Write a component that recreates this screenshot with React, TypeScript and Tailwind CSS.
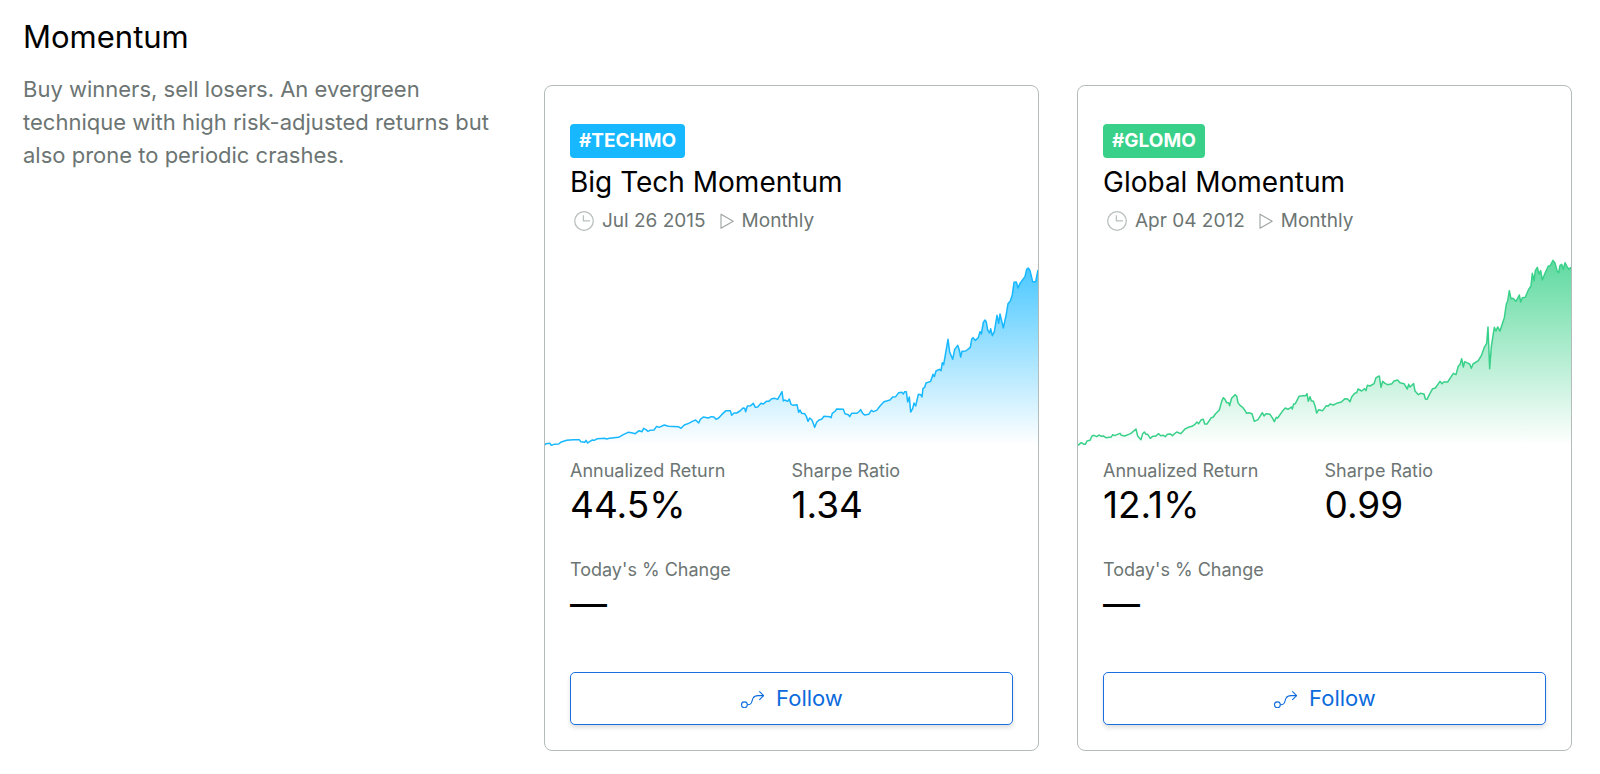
import * as React from 'react';
import clsx from 'clsx';

type Strategy = {
  tag: string;
  name: string;
  since: string;
  rebalance: string;
  annualReturn: string;
  sharpe: string;
  change: string;
  color: string;
  badge: string;
  points: string;
};

export default function App() {
  return (
    <main className="grid grid-cols-3 gap-x-[38px] pl-[11px] pr-7 pt-5 pb-6 bg-white font-['Inter',sans-serif] text-black">
      <header className="pl-3">
        <h1 className="text-[31px] leading-[34px]">Momentum</h1>
        <p className="mt-[19px] text-[22px] leading-[33px] text-[#6c7573]">
          Buy winners, sell losers. An evergreen technique with high risk-adjusted returns but also
          prone to periodic crashes.
        </p>
      </header>

      {strategies.map((strategy) => (
        <StrategyCard key={strategy.tag} {...strategy} />
      ))}
    </main>
  );
}

function StrategyCard(props: Strategy) {
  return (
    <article className="mt-[65px] overflow-hidden rounded-lg border border-[#b4bcba]">
      <div className="px-[25px] pt-[38px]">
        <span
          className={clsx(
            'inline-flex h-[34px] items-center rounded px-[9px] text-[19px] font-bold text-white',
            props.badge
          )}
        >
          {props.tag}
        </span>
        <h2 className="mt-1.5 text-[28px] leading-9">{props.name}</h2>
        <div className="mt-2 flex h-[26px] items-center text-[19px] text-[#6c7573]">
          <ClockIcon />
          <span className="ml-2">{props.since}</span>
          <PlayIcon />
          <span className="ml-2">{props.rebalance}</span>
        </div>
      </div>

      <Chart id={props.tag.slice(1)} color={props.color} points={props.points} />

      <div className="px-[25px] pt-2 pb-[25px]">
        <dl className="grid grid-cols-2 gap-y-[31px]">
          <Stat label="Annualized Return" value={props.annualReturn} />
          <Stat label="Sharpe Ratio" value={props.sharpe} />
          <Stat label="Today's % Change" value={props.change} />
        </dl>
        <button
          type="button"
          className="mt-[47px] flex h-[53px] w-full items-center justify-center gap-3 rounded-[5px] border border-[#1a6fe0] bg-white text-[22px] text-[#0b6bdc] shadow-[0_3px_4px_rgba(0,0,0,0.12)]"
        >
          <FollowIcon />
          Follow
        </button>
      </div>
    </article>
  );
}

function Stat({ label, value }: { label: string; value: string }) {
  return (
    <div>
      <dt className="text-[18px] leading-[26px] text-[#6c7573]">{label}</dt>
      <dd className="text-[37px] leading-[42px]">{value}</dd>
    </div>
  );
}

function Chart({ id, color, points }: { id: string; color: string; points: string }) {
  return (
    <svg
      className="mt-4 block h-[200px] w-full"
      viewBox="0 0 1479 600"
      preserveAspectRatio="none"
      aria-hidden="true"
    >
      <defs>
        <linearGradient id={id} gradientUnits="userSpaceOnUse" x1="0" y1="0" x2="0" y2="585">
          <stop offset="0" stopColor={color} stopOpacity="0.85" />
          <stop offset="1" stopColor={color} stopOpacity="0" />
        </linearGradient>
      </defs>
      <polygon points={`0,586 ${points} 1479,586`} fill={`url(#${id})`} />
      <polyline
        points={points}
        fill="none"
        stroke={color}
        strokeWidth="1.5"
        strokeLinejoin="round"
        vectorEffect="non-scaling-stroke"
      />
    </svg>
  );
}

function ClockIcon() {
  return (
    <svg className="ml-1 size-5" viewBox="0 0 20 20" fill="none" stroke="#b9bfbe" aria-hidden="true">
      <circle cx="10" cy="10" r="9.3" strokeWidth="1.3" />
      <path d="M9.4 4.2V9.8H16" strokeWidth="1.3" />
    </svg>
  );
}

function PlayIcon() {
  return (
    <svg className="ml-3.5 h-4 w-3.5" viewBox="0 0 14 16" fill="none" stroke="#9da3a2" aria-hidden="true">
      <path d="M1 1.2V15.2L13.2 8.2Z" strokeWidth="1.1" strokeLinejoin="round" />
    </svg>
  );
}

function FollowIcon() {
  return (
    <svg className="h-[18px] w-6" viewBox="0 0 24 18" fill="none" stroke="currentColor" aria-hidden="true">
      <circle cx="4.4" cy="14.8" r="2.9" strokeWidth="1.1" />
      <path d="M7.3 14.8C13 14.8 11.3 11 13 8.2C14.2 6.1 15.8 5.6 18 5.6H23.4" strokeWidth="1.1" />
      <path d="M19.3 1.3L23.6 5.6L19.3 9.9" strokeWidth="1.1" />
    </svg>
  );
}

const strategies: Strategy[] = [
  {
    tag: '#TECHMO',
    name: 'Big Tech Momentum',
    since: 'Jul 26 2015',
    rebalance: 'Monthly',
    annualReturn: '44.5%',
    sharpe: '1.34',
    change: '—',
    color: '#17b8ff',
    badge: 'bg-[#17b8ff]',
    points:
      '0,585 3,581 15,580 19,586 27,583 41,582 47,577 65,571 85,569 103,569 107,575 119,577 123,571 128,579 135,574 142,570 148,571 157,566 180,565 185,567 193,565 221,562 235,554 249,547 260,548 271,551 282,542 291,545 296,535 303,539 309,544 315,541 327,540 335,529 342,532 358,525 370,529 400,530 408,535 418,525 431,520 442,514 452,510 461,519 466,508 475,501 490,504 499,500 507,501 513,508 521,504 530,494 543,482 556,482 560,496 567,489 575,489 585,483 594,474 599,475 602,485 607,468 617,467 625,460 631,472 638,471 648,460 655,462 664,454 672,454 680,446 690,445 698,448 711,425 715,453 719,450 728,454 733,447 738,463 745,466 756,464 761,487 765,480 770,490 779,491 784,499 789,514 794,504 801,510 809,532 815,517 822,510 830,508 837,499 855,500 858,503 862,490 871,483 875,477 895,478 900,491 910,494 914,500 920,490 935,490 941,486 947,479 953,490 959,495 971,493 979,481 985,485 995,481 1005,468 1017,455 1035,450 1043,441 1052,440 1061,428 1070,427 1075,432 1079,425 1084,425 1088,456 1093,441 1097,486 1103,476 1107,459 1112,468 1120,433 1127,434 1131,441 1134,415 1139,412 1143,399 1157,394 1164,373 1168,380 1173,363 1183,358 1188,362 1192,338 1196,344 1209,268 1214,306 1223,328 1229,298 1238,286 1243,300 1247,321 1251,304 1262,303 1276,292 1280,268 1284,263 1291,271 1300,263 1305,245 1309,252 1315,217 1320,210 1324,216 1328,240 1334,249 1337,236 1342,257 1348,245 1356,196 1361,220 1365,192 1375,234 1384,192 1389,161 1396,153 1402,134 1407,97 1414,96 1419,114 1425,100 1440,80 1445,58 1450,54 1455,62 1463,95 1472,95 1479,60',
  },
  {
    tag: '#GLOMO',
    name: 'Global Momentum',
    since: 'Apr 04 2012',
    rebalance: 'Monthly',
    annualReturn: '12.1%',
    sharpe: '0.99',
    change: '—',
    color: '#39d189',
    badge: 'bg-[#39d189]',
    points:
      '0,586 10,578 18,583 22,583 27,573 36,571 42,558 48,556 56,560 64,555 70,559 76,558 84,563 100,561 104,554 110,557 126,550 130,556 140,558 158,551 174,537 179,558 189,569 194,551 199,546 204,553 209,553 217,565 224,559 232,559 242,551 248,557 256,556 262,560 268,553 278,552 283,557 296,546 308,551 321,537 331,532 342,529 351,523 357,516 362,521 370,509 376,508 380,522 387,522 400,503 406,501 412,492 424,480 431,454 436,443 441,448 446,458 452,458 455,467 461,444 466,440 471,434 476,438 480,458 486,466 494,472 502,483 506,490 512,488 522,491 529,514 540,509 553,488 558,498 564,491 576,493 584,505 589,515 595,502 599,504 613,484 622,474 630,478 640,471 643,477 647,462 652,461 663,439 676,437 683,437 687,431 691,454 696,440 700,452 706,454 711,467 716,489 722,479 734,482 745,467 751,468 756,462 766,465 776,460 790,456 801,446 809,447 816,455 821,441 830,430 836,428 840,417 851,423 860,416 864,422 868,406 876,408 888,401 894,383 904,378 909,412 914,394 921,400 929,404 942,401 948,393 959,390 966,398 978,401 988,417 992,403 996,411 1007,401 1011,423 1021,434 1027,430 1038,432 1042,447 1047,448 1054,434 1064,416 1072,414 1086,394 1092,401 1097,396 1109,396 1126,370 1134,374 1141,348 1146,344 1151,326 1156,351 1160,335 1166,338 1175,342 1180,355 1185,342 1201,332 1210,317 1219,292 1226,280 1230,231 1235,356 1240,290 1249,232 1254,243 1259,231 1266,243 1279,203 1285,162 1289,153 1294,122 1299,146 1305,145 1314,154 1324,135 1328,156 1333,143 1342,142 1352,118 1359,108 1363,70 1368,92 1372,62 1378,52 1383,72 1388,62 1393,90 1401,70 1411,48 1416,48 1425,31 1431,39 1437,62 1442,68 1446,46 1451,43 1456,58 1461,38 1468,52 1473,58 1479,52',
  },
];
